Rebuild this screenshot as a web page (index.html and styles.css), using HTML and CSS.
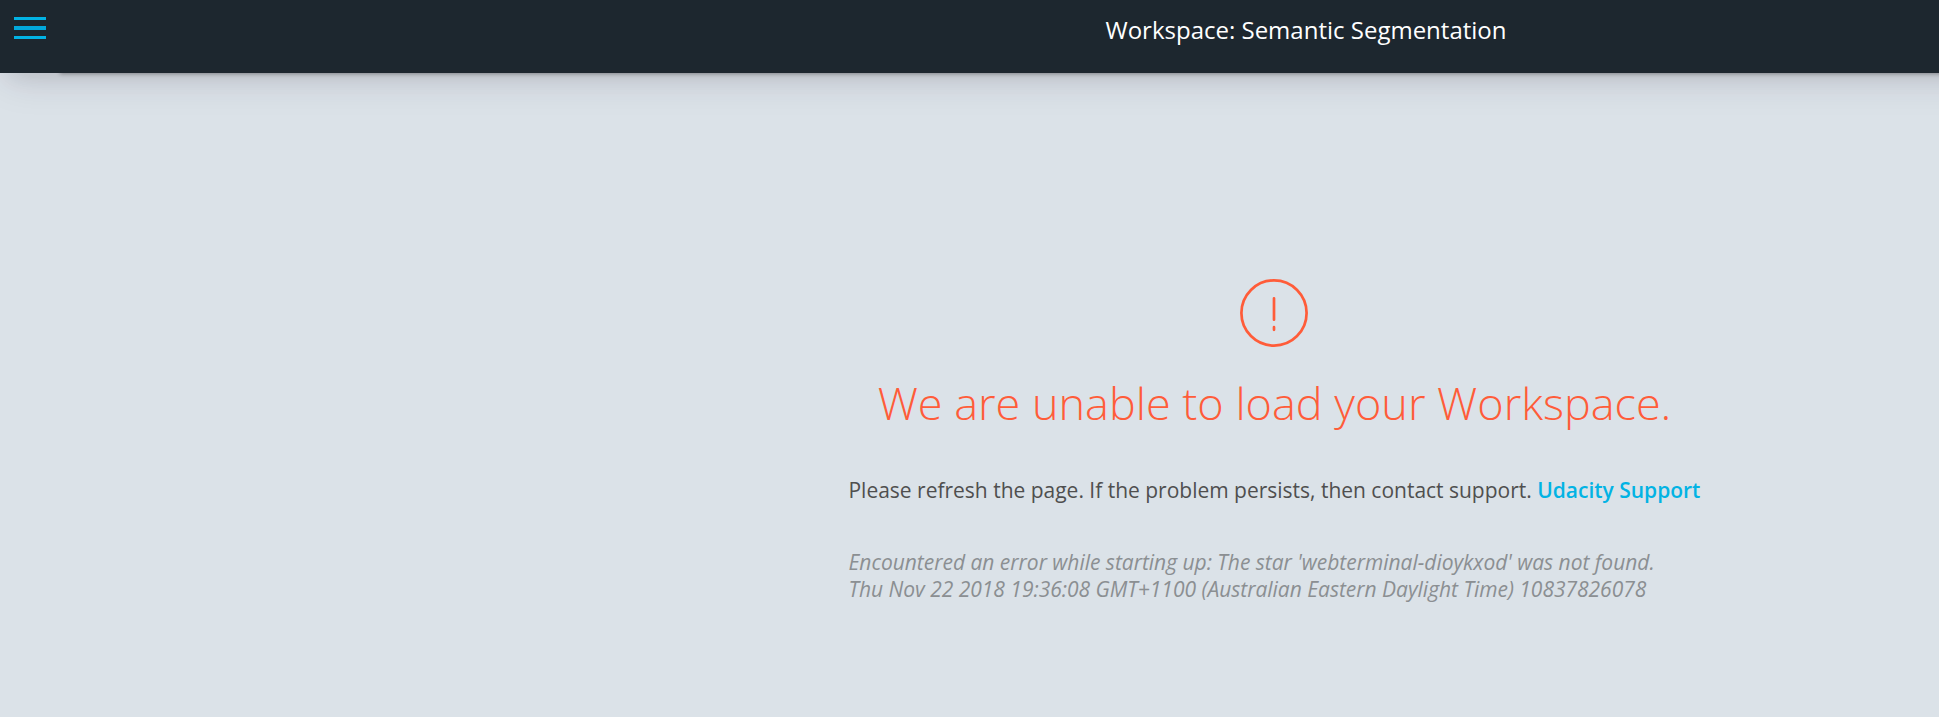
FILE: index.html
```html
<!DOCTYPE html>
<html lang="en">
<head>
<meta charset="utf-8">
<title>Workspace: Semantic Segmentation</title>
<link rel="stylesheet" href="styles.css">
</head>
<body>
<header class="topbar">
  <button class="menu" aria-label="Menu"><svg width="34" height="24" viewBox="0 0 34 24"><path d="M1 1.5h32M1 20.5h32" stroke="#02b3e4" stroke-width="3"/><path d="M1 11h32" stroke="#02a8dc" stroke-width="4"/></svg></button>
  <h1 class="title"><span>Workspace: Semantic Segmentation</span></h1>
</header>
<main class="content">
  <section class="error">
    <svg class="icon" width="68" height="68" viewBox="0 0 68 68" fill="none" stroke="#ff5c39" stroke-width="2.7"><circle cx="34" cy="34" r="32.6"/><path d="M34 19.3v21.4M34 48.2v2.6" stroke-linecap="round"/></svg>
    <h2 class="heading"><span>We are unable to load your Workspace.</span></h2>
    <p class="message"><span>Please refresh the page. If the problem persists, then contact support. </span><a class="link" href="#">Udacity Support</a></p>
    <p class="detail"><span>Encountered an error while starting up: The star 'webterminal-dioykxod' was not found.</span><br><span>Thu Nov 22 2018 19:36:08 GMT+1100 (Australian Eastern Daylight Time) 10837826078</span></p>
  </section>
</main>
</body>
</html>
```
FILE: styles.css
```css
* { box-sizing: border-box; }
body {
  margin: 0;
  height: 717px;
  overflow: hidden;
  background: #dbe2e8;
  font-family: "Open Sans", sans-serif;
}
.topbar {
  position: relative;
  display: flex;
  width: calc(100% + 60px);
  height: 73px;
  padding-right: 60px;
  background: #1d272f;
  box-shadow: 60px 1px 4px rgba(0, 0, 0, .32), 12px 2px 20px rgba(20, 25, 20, .1), 5px 5px 40px rgba(46, 20, 60, .14);
}
.menu {
  display: flex;
  align-items: flex-start;
  width: 60px;
  height: 56px;
  padding: 17px 0 0 13px;
  border: 0;
  background: none;
}
.title {
  flex: 1;
  margin: 0 0 0 613px;
  padding-top: 13px;
  color: #fff;
  font-size: 24px;
  font-weight: 400;
  line-height: 34px;
  text-align: center;
  white-space: nowrap;
}
.content {
  display: flex;
  justify-content: center;
  padding: 206px 0 0 610px;
}
.error {
  display: flex;
  flex-direction: column;
  align-items: center;
  width: 852px;
  white-space: nowrap;
}
.icon {
  display: block;
  margin-right: 1px;
}
.heading {
  margin: 24px 0 0;
  color: #ff5c39;
  font-size: 45px;
  font-weight: 300;
  line-height: 64px;
}
.message {
  align-self: flex-start;
  margin: 40px 0 0;
  color: #4f4f4f;
  font-size: 21px;
  font-weight: 400;
  letter-spacing: -0.01px;
  line-height: 30px;
}
.link {
  color: #02b3e4;
  font-weight: 600;
  text-decoration: none;
}
.detail {
  align-self: flex-start;
  margin: 44px 0 0;
  color: #8b8f92;
  font-size: 21px;
  font-style: italic;
  letter-spacing: -0.02px;
  line-height: 27px;
}
```
